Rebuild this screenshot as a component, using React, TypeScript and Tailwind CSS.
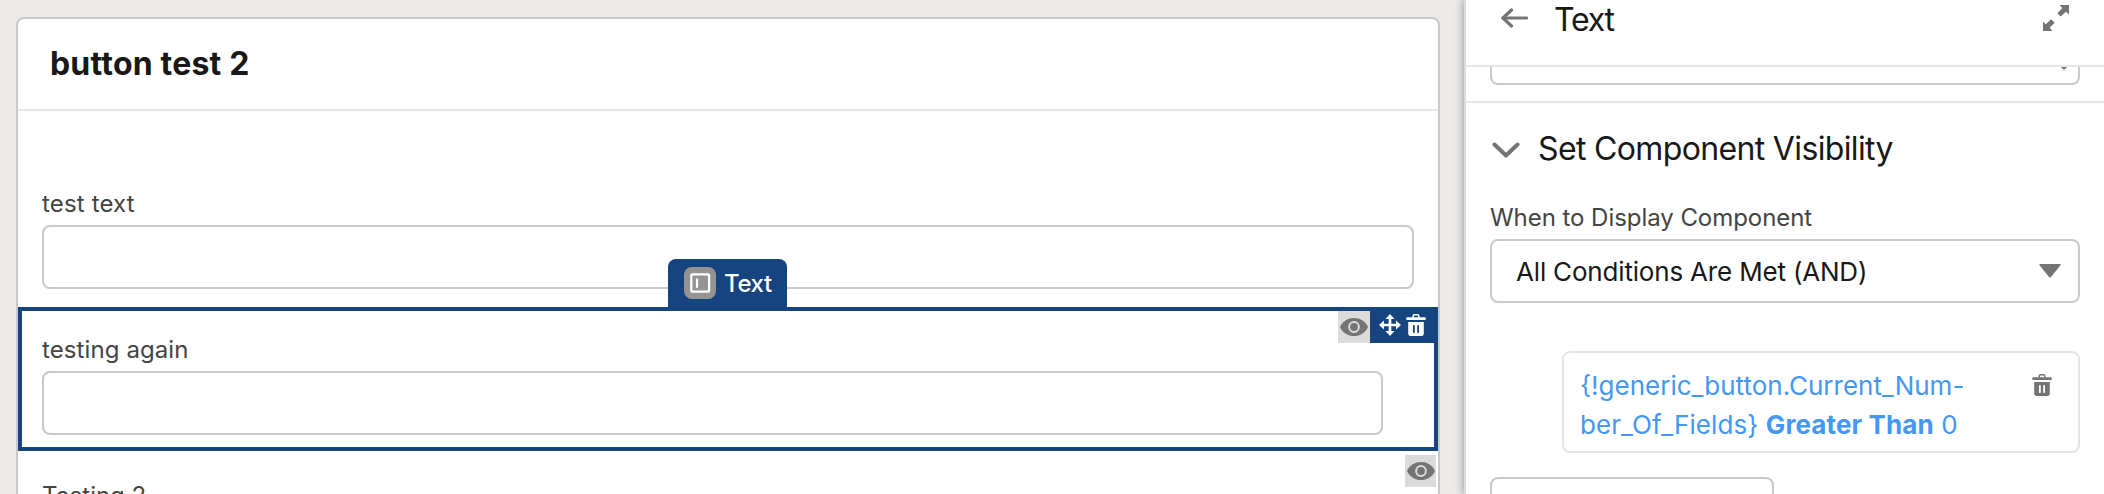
import type { ReactNode } from "react";

function EyeIcon() {
  return (
    <svg width="28" height="20" viewBox="0 0 28 20" fill="none">
      <path d="M.3 9.3C2.8 4.200 8 1 14 1s11.200 3.200 13.700 8.300c.2.500.2.900 0 1.400C25.200 15.800 20 19 14 19S2.800 15.800.3 10.700c-.2-.5-.2-.9 0-1.400z" fill="#747474" />
      <circle cx="14" cy="10" r="4.900" fill="#747474" stroke="#dddbda" strokeWidth="2" />
    </svg>
  );
}

function TrashIcon({ color, inner, className }: { color: string; inner: string; className: string }) {
  return (
    <svg className={className} viewBox="0 0 20 22">
      <path d="M7.200 3.500V2.200C7.200 1.400 7.800.8 8.600.8h2.800c.8 0 1.400.6 1.400 1.400v1.300" fill="none" stroke={color} strokeWidth="1.600" />
      <rect x="0.200" y="3.300" width="19.600" height="2.700" rx="1" fill={color} />
      <path d="M2.200 8h15.600v11.800c0 1.200-.9 2.200-2.200 2.200H4.400c-1.300 0-2.200-1-2.200-2.200z" fill={color} />
      <rect x="7" y="11" width="1.800" height="8" rx=".7" fill={inner} />
      <rect x="11.200" y="11" width="1.800" height="8" rx=".7" fill={inner} />
    </svg>
  );
}

function MoveIcon() {
  return (
    <svg width="22" height="22" viewBox="0 0 22 22">
      <path d="M11 2v18M2 11h18" stroke="#fff" strokeWidth="2.600" />
      <path d="M11 0l4.600 5H6.400zM11 22l4.600-5H6.400zM0 11l5-4.600v9.200zM22 11l-5-4.600v9.200z" fill="#fff" />
    </svg>
  );
}

function Label({ children }: { children: ReactNode }) {
  return <div className="h-[30px] pt-px text-[24px] leading-[30px] text-[#444]">{children}</div>;
}

function Canvas() {
  return (
    <main className="h-full w-[1464px] shrink-0 bg-[#ecebea] pl-4 pt-[17px]">
      <section className="h-[520px] w-[1424px] rounded-t-lg border-2 border-[#c9c9c9] bg-white">
        <h1 className="flex h-[92px] items-center border-b-2 border-[#e5e5e5] pl-8 text-[32px] font-bold leading-10 text-[#181818]">
          <span className="tracking-[0.2px]">button test 2</span>
        </h1>
        <div className="h-[196px] px-6 pt-[77px]">
          <Label><span className="tracking-[0.15px]">test text</span></Label>
          <div className="mt-[7px] h-16 rounded-lg border-2 border-[#c9c9c9]" />
        </div>
        <div className="relative h-36 border-4 border-[#16447f] pl-5 pt-[23px]">
          <div className="absolute left-[646px] top-[-52px] flex h-[50px] w-[119px] items-start rounded-t-lg bg-[#16447f] pl-4 pt-2">
            <svg width="32" height="32" viewBox="0 0 32 32">
              <rect width="32" height="32" rx="8" fill="#969492" />
              <rect x="7.300" y="7.300" width="17.800" height="17.400" rx="1" fill="none" stroke="#fff" strokeWidth="2.200" />
              <path d="M13 12.500v7.500" stroke="#fff" strokeWidth="2.200" strokeLinecap="round" />
            </svg>
            <span className="ml-2 pt-px text-[24px] font-medium leading-8 tracking-[-0.4px] text-white">Text</span>
          </div>
          <div className="absolute right-[-4px] top-0 flex h-8">
            <div className="flex w-8 items-center justify-center bg-[#dddbda]"><EyeIcon /></div>
            <div className="flex w-[68px] gap-[5px] bg-[#16447f] pl-[9px] pt-[3px]">
              <MoveIcon />
              <TrashIcon color="#fff" inner="#16447f" className="h-[22px] w-5" />
            </div>
          </div>
          <Label><span className="tracking-[0.1px]">testing again</span></Label>
          <div className="mt-[7px] h-16 w-[1341px] rounded-lg border-2 border-[#c9c9c9]" />
        </div>
        <div className="flex justify-between pl-6 pr-[2px] pt-1">
          <div className="pt-[25px]"><Label>Testing 2</Label></div>
          <div className="flex h-8 w-[31px] items-center justify-center bg-[#dddbda]"><EyeIcon /></div>
        </div>
      </section>
    </main>
  );
}

function Properties() {
  return (
    <aside className="relative h-full flex-1 border-l-2 border-[#dddddd] bg-white shadow-[0_0_9px_rgba(0,0,0,0.4)]">
      <header className="flex h-[67px] items-start border-b-2 border-[#e5e5e5] pl-[35px] pr-[35px]">
        <svg className="mt-2" width="27" height="20" viewBox="0 0 27 20" fill="none" stroke="#747474" strokeWidth="3.200" strokeLinecap="round" strokeLinejoin="round">
          <path d="M10.500 2L2 10l8.500 8" />
          <path d="M2 10h23.500" />
        </svg>
        <h2 className="ml-[26px] flex-1 text-[32px] leading-10 tracking-[-1.2px] text-[#181818]">Text</h2>
        <svg className="mt-[5px]" width="26" height="26" viewBox="0 0 26 26" fill="#747474">
          <path d="M16.500 0h9.500v9.500l-3-2.700-5.300 4.700-3.300-3.300L19.300 3z" />
          <path d="M9.500 26H0v-9.500l2.700 2.700 5.500-5 3.500 3.500-5 5z" />
        </svg>
      </header>
      <div className="h-9 border-b-2 border-[#e5e5e5] px-6">
        <div className="flex h-[18px] justify-end rounded-b-lg border-2 border-t-0 border-[#c9c9c9] pr-[9px]">
          <svg width="10" height="4" viewBox="0 0 10 4" fill="#747474"><path d="M2 0h6L5 3z" /></svg>
        </div>
      </div>
      <div className="px-6 pt-[25px]">
        <div className="flex h-10 items-center pl-[2px]">
          <svg className="mt-[5px]" width="28" height="17" viewBox="0 0 28 17" fill="none" stroke="#747474" strokeWidth="4" strokeLinecap="round" strokeLinejoin="round">
            <path d="M2.500 2.500L14 13.500l11.500-11" />
          </svg>
          <h3 className="ml-[18px] pt-px text-[32px] leading-10 tracking-[-0.65px] text-[#181818]">Set Component Visibility</h3>
        </div>
        <div className="mt-[34px]"><Label><span className="tracking-[-0.05px]">When to Display Component</span></Label></div>
        <div className="mt-[7px] flex h-16 items-center justify-between rounded-lg border-2 border-[#c9c9c9] pl-6 pr-[17px]">
          <span className="pt-0.5 text-[26px] leading-10 tracking-[-0.18px] text-[#181818]">All Conditions Are Met (AND)</span>
          <svg width="22" height="14" viewBox="0 0 22 14" fill="#747474"><path d="M1 0h20q1.200.3.400 1.300L12 13q-1 1.200-2 0L.6 1.300Q-.2.3 1 0z" /></svg>
        </div>
        <div className="ml-[72px] mt-12 flex h-[102px] justify-between rounded-lg border-2 border-[#e5e5e5] pl-4 pr-[26px] pt-[13px] text-[26px] leading-[39px] text-[#4497f5]">
          <p className="whitespace-nowrap">
            <span className="tracking-[0px]">{"{!generic_button.Current_Num-"}</span><br />
            <span className="tracking-[0.07px]">{"ber_Of_Fields} "}</span>
            <b className="tracking-[0.12px]">Greater Than</b> 0
          </p>
          <TrashIcon color="#747474" inner="#fff" className="mt-2 h-[22px] w-5" />
        </div>
        <div className="mt-6 h-16 w-[284px] rounded-lg border-2 border-[#c9c9c9]" />
      </div>
    </aside>
  );
}

export default function App() {
  return (
    <div className="flex h-[494px] w-full overflow-hidden bg-white font-['Inter',sans-serif]">
      <Canvas />
      <Properties />
    </div>
  );
}
